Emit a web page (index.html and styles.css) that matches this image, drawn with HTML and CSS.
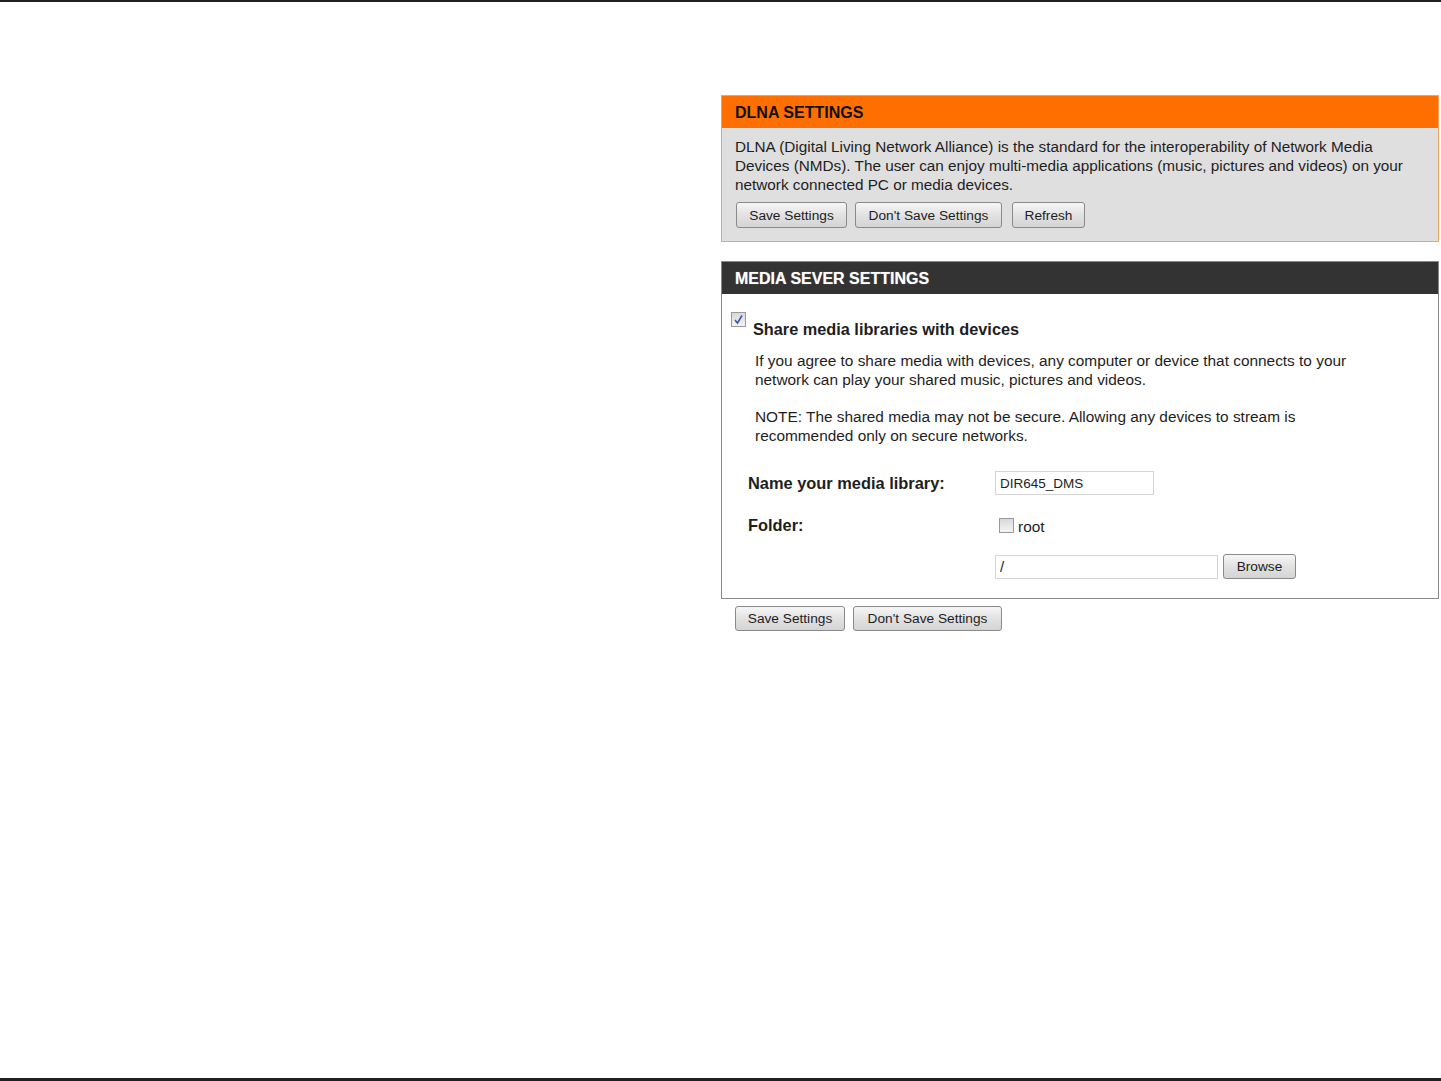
FILE: index.html
```html
<!DOCTYPE html>
<html>
<head>
<meta charset="UTF-8">
<title>DLNA Settings</title>
<link rel="stylesheet" href="styles.css">
</head>
<body>
<div class="page">
    <div class="topline"></div>
    <div class="content">
        <div class="box dlna">
            <div class="boxhead">DLNA SETTINGS</div>
            <div class="boxbody">
                <p class="intro">DLNA (Digital Living Network Alliance) is the standard for the interoperability of Network Media Devices (NMDs). The user can enjoy multi-media applications (music, pictures and videos) on your network connected PC or media devices.</p>
                <div class="btns">
                    <button class="btn btn-save">Save Settings</button>
                    <button class="btn btn-dont">Don't Save Settings</button>
                    <button class="btn btn-refresh">Refresh</button>
                </div>
            </div>
        </div>

        <div class="box media">
            <div class="boxhead">MEDIA SEVER SETTINGS</div>
            <div class="boxbody">
                <div class="share">
                    <span class="chk checked"><svg width="11" height="11" viewBox="0 0 11 11"><path d="M2 6 L4.5 9 L9 1.5" fill="none" stroke="#3b5aa8" stroke-width="1.6"/></svg></span>
                    <span class="sharetitle">Share media libraries with devices</span>
                </div>
                <p class="note">If you agree to share media with devices, any computer or device that connects to your network can play your shared music, pictures and videos.</p>
                <p class="note">NOTE: The shared media may not be secure. Allowing any devices to stream is recommended only on secure networks.</p>
                <div class="row row-name">
                    <div class="label">Name your media library:</div>
                    <div class="field"><input type="text" class="txt txt-name" value="DIR645_DMS"></div>
                </div>
                <div class="row row-folder">
                    <div class="label">Folder:</div>
                    <div class="field"><span class="chk"></span><span class="root">root</span></div>
                </div>
                <div class="row row-path">
                    <div class="label"></div>
                    <div class="field"><input type="text" class="txt txt-path" value="/"><button class="btn btn-browse">Browse</button></div>
                </div>
            </div>
        </div>
        <div class="btns bottom">
            <button class="btn btn-save2">Save Settings</button>
            <button class="btn btn-dont2">Don't Save Settings</button>
        </div>
    </div>
    <div class="bottomline"></div>
</div>
</body>
</html>
```

FILE: styles.css
```css
html, body {
  margin: 0;
  padding: 0;
  background: white;
}
.page {
  display: flex;
  flex-direction: column;
  height: 1081px;
  font-family: "Liberation Sans", Arial, sans-serif;
  color: #1e1e1e;
}
.topline {
  height: 2px;
  background: #231f20;
}
.bottomline {
  height: 3px;
  background: #231f20;
}
.content {
  flex: 1;
  padding: 93px 0 0 721px;
  width: 718px;
}

.box {
  border: 1px solid #888;
}
.boxhead {
  height: 32px;
  line-height: 33px;
  padding-left: 13px;
  font-size: 16px;
  font-weight: bold;
}
.dlna {
  border-color: #f7a25a;
  background: #dfdfdf;
}
.dlna .boxhead {
  background: #ff6f00;
  color: #111;
}
.dlna .boxbody {
  padding: 9px 12px 13px 13px;
}
.intro {
  margin: 0;
  font-size: 15.3px;
  line-height: 19px;
}

.btns {
  display: flex;
  gap: 8px;
  margin-top: 8px;
}
.btn {
  font-family: "Liberation Sans", Arial, sans-serif;
  font-size: 13.7px;
  color: #1e1e1e;
  height: 26px;
  padding: 0;
  white-space: nowrap;
  border: 1px solid #8a8a8a;
  border-radius: 3px;
  background: linear-gradient(#f6f6f6, #e2e2e2 50%, #d4d4d4);
}
.btn-save { width: 111px; margin-left: 1px; }
.btn-dont { width: 147px; }
.btn-refresh { width: 73px; margin-left: 2px; }

.media {
  margin-top: 19px;
  background: white;
}
.media .boxhead {
  background: #333;
  color: white;
  text-shadow: 0 0 1px #999;
}
.media .boxbody {
  padding: 18px 10px 19px 9px;
}
.share {
  display: flex;
  align-items: flex-start;
}
.chk {
  display: inline-block;
  width: 13px;
  height: 13px;
  border: 1px solid #9a9a9a;
  background: linear-gradient(#d8d8d8, #f4f4f4);
  box-sizing: content-box;
}
.chk.checked {
  display: flex;
  align-items: center;
  justify-content: center;
}
.sharetitle {
  font-weight: bold;
  font-size: 16.3px;
  margin: 8px 0 0 7px;
}
.note {
  margin: 12px 0 0 24px;
  font-size: 15.4px;
  line-height: 19px;
  width: 625px;
}
.note + .note {
  margin-top: 18px;
}

.row {
  display: flex;
  align-items: center;
}
.label {
  width: 247px;
  padding-left: 17px;
  font-weight: bold;
  font-size: 16.4px;
}
.field {
  display: flex;
  align-items: center;
}
.row-name {
  margin-top: 26px;
}
.row-folder {
  margin-top: 19px;
}
.row-folder .field {
  padding-left: 4px;
}
.root {
  font-size: 15.4px;
  margin: 4px 0 0 4px;
}
.row-path {
  margin-top: 18px;
}
.txt {
  font-family: "Liberation Sans", Arial, sans-serif;
  font-size: 13.5px;
  height: 24px;
  box-sizing: border-box;
  border: 1px solid #d4d4d4;
  padding: 0 4px;
  color: #1e1e1e;
}
.txt-name { width: 159px; }
.txt-path { width: 223px; font-size: 15px; }
.btn-browse {
  width: 73px;
  height: 25px;
  margin-left: 5px;
}
.bottom {
  margin: 7px 0 0 14px;
  height: 25px;
}
.bottom .btn {
  height: 25px;
}
.btn-save2 { width: 110px; }
.btn-dont2 { width: 149px; }
```
